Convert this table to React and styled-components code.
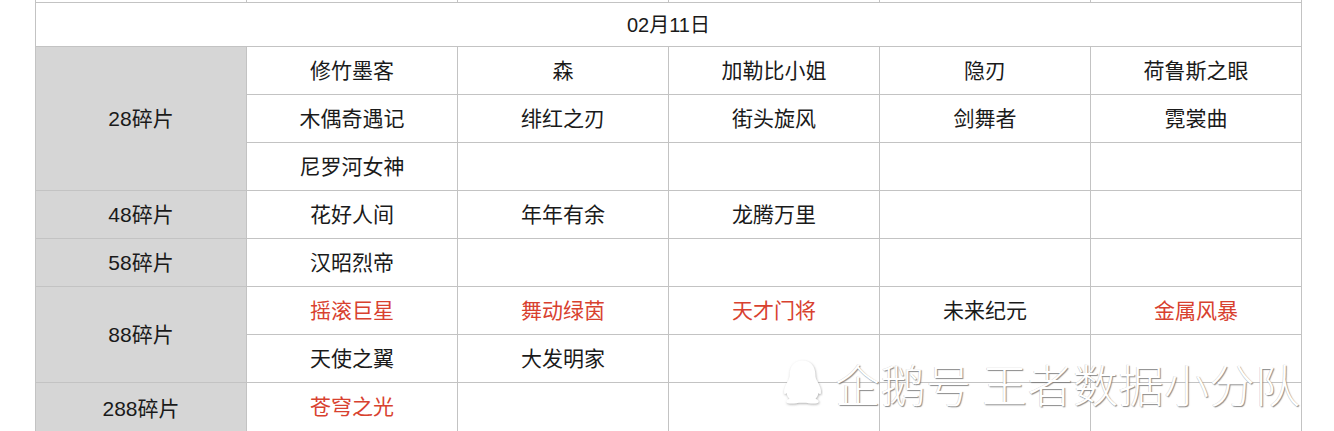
import React from 'react';
import styled, { createGlobalStyle } from 'styled-components';

const GlobalStyle = createGlobalStyle`
  html, body {
    margin: 0;
    padding: 0;
    background: #ffffff;
    overflow: hidden;
  }
`;

const groups = [
  {
    label: '28碎片',
    rows: [
      ['修竹墨客', '森', '加勒比小姐', '隐刃', '荷鲁斯之眼'],
      ['木偶奇遇记', '绯红之刃', '街头旋风', '剑舞者', '霓裳曲'],
      ['尼罗河女神', '', '', '', ''],
    ],
  },
  { label: '48碎片', rows: [['花好人间', '年年有余', '龙腾万里', '', '']] },
  { label: '58碎片', rows: [['汉昭烈帝', '', '', '', '']] },
  {
    label: '88碎片',
    rows: [
      [
        { text: '摇滚巨星', hot: true },
        { text: '舞动绿茵', hot: true },
        { text: '天才门将', hot: true },
        '未来纪元',
        { text: '金属风暴', hot: true },
      ],
      ['天使之翼', '大发明家', '', '', ''],
    ],
  },
  { label: '288碎片', rows: [[{ text: '苍穹之光', hot: true }, '', '', '', '']] },
];

function App() {
  let rowIndex = 3;
  return (
    <Page>
      <GlobalStyle />
      <Sheet>
        {[0, 1, 2, 3, 4, 5].map(i => (
          <PrevCell key={'p' + i} />
        ))}
        <DateCell>02月11日</DateCell>
        {groups.map(group => {
          const start = rowIndex;
          rowIndex += group.rows.length;
          return (
            <React.Fragment key={group.label}>
              <LabelCell style={{ gridRow: `${start} / span ${group.rows.length}` }}>
                {group.label}
              </LabelCell>
              {group.rows.map((row, r) =>
                row.map((cell, c) => {
                  const item = typeof cell === 'string' ? { text: cell } : cell;
                  return (
                    <Cell key={`${group.label}-${r}-${c}`} $hot={item.hot}>
                      {item.text}
                    </Cell>
                  );
                })
              )}
            </React.Fragment>
          );
        })}
      </Sheet>
      <Watermark>
        <Penguin viewBox="0 0 40 48" aria-hidden="true">
          <defs>
            <filter id="shade" x="-30%" y="-30%" width="160%" height="160%">
              <feDropShadow dx="0.6" dy="1" stdDeviation="0.9" floodColor="#8a8a8a" floodOpacity="0.7" />
            </filter>
          </defs>
          <path
            filter="url(#shade)"
            fill="#ffffff"
            d="M20 2c-8 0-12.5 6-12.5 13.5 0 3-.5 4.5-2 7-2 3.5-4 7.5-3.5 11 .3 1.8 1.3 1.6 2.5.2.3 2.2 1.4 4.3 2.8 5.6-2 .8-3.3 2-3 3.2.4 1.6 5 2 9.7 1.2 1.6-.3 3-.4 6-.4s4.4.1 6 .4c4.7.8 9.3.4 9.7-1.2.3-1.2-1-2.4-3-3.2 1.4-1.3 2.5-3.4 2.8-5.6 1.2 1.4 2.2 1.6 2.5-.2.5-3.5-1.5-7.5-3.5-11-1.5-2.5-2-4-2-7C32.5 8 28 2 20 2z"
          />
        </Penguin>
        <MarkText>企鹅号 王者数据小分队</MarkText>
      </Watermark>
    </Page>
  );
}

const Page = styled.div`
  position: relative;
  width: 1334px;
  height: 431px;
  padding-left: 35px;
  box-sizing: border-box;
  font-family: 'Liberation Sans', 'Noto Sans CJK SC', sans-serif;
  color: #1a1a1a;
`;

const Sheet = styled.div`
  display: grid;
  grid-template-columns: repeat(6, 211px);
  grid-template-rows: 3px 44px repeat(7, 48px) 52px;
  border-left: 1px solid #c3c3c3;
  width: max-content;
`;

const CellBase = styled.div`
  display: flex;
  align-items: center;
  justify-content: center;
  border-right: 1px solid #c3c3c3;
  border-bottom: 1px solid #c3c3c3;
  font-size: 21px;
  white-space: nowrap;
  padding-bottom: 3px;
`;

const PrevCell = styled.div`
  border-right: 1px solid #c3c3c3;
  border-bottom: 1px solid #c3c3c3;
  box-sizing: border-box;
`;

const DateCell = styled(CellBase)`
  grid-column: 1 / span 6;
  background: #ffffff;
  font-size: 20px;
`;

const LabelCell = styled(CellBase)`
  grid-column: 1;
  background: #d6d6d6;
`;

const Cell = styled(CellBase)`
  background: #ffffff;
  color: ${props => (props.$hot ? '#d8412f' : '#1a1a1a')};
  &:nth-last-child(-n + 5) {
    padding-bottom: 7px;
  }
`;

const Watermark = styled.div`
  position: absolute;
  left: 782px;
  top: 358px;
  display: flex;
  align-items: center;
  gap: 12px;
  pointer-events: none;
`;

const Penguin = styled.svg`
  width: 41px;
  height: 50px;
`;

const MarkText = styled.span`
  font-family: 'Noto Sans CJK SC', sans-serif;
  font-size: 45px;
  font-weight: 300;
  line-height: 1;
  color: #ffffff;
  letter-spacing: 0.5px;
  text-shadow: 1px 1px 1px rgba(110, 110, 110, 0.8), -0.5px -0.5px 0.5px rgba(160, 160, 160, 0.5);
`;

export default App;
